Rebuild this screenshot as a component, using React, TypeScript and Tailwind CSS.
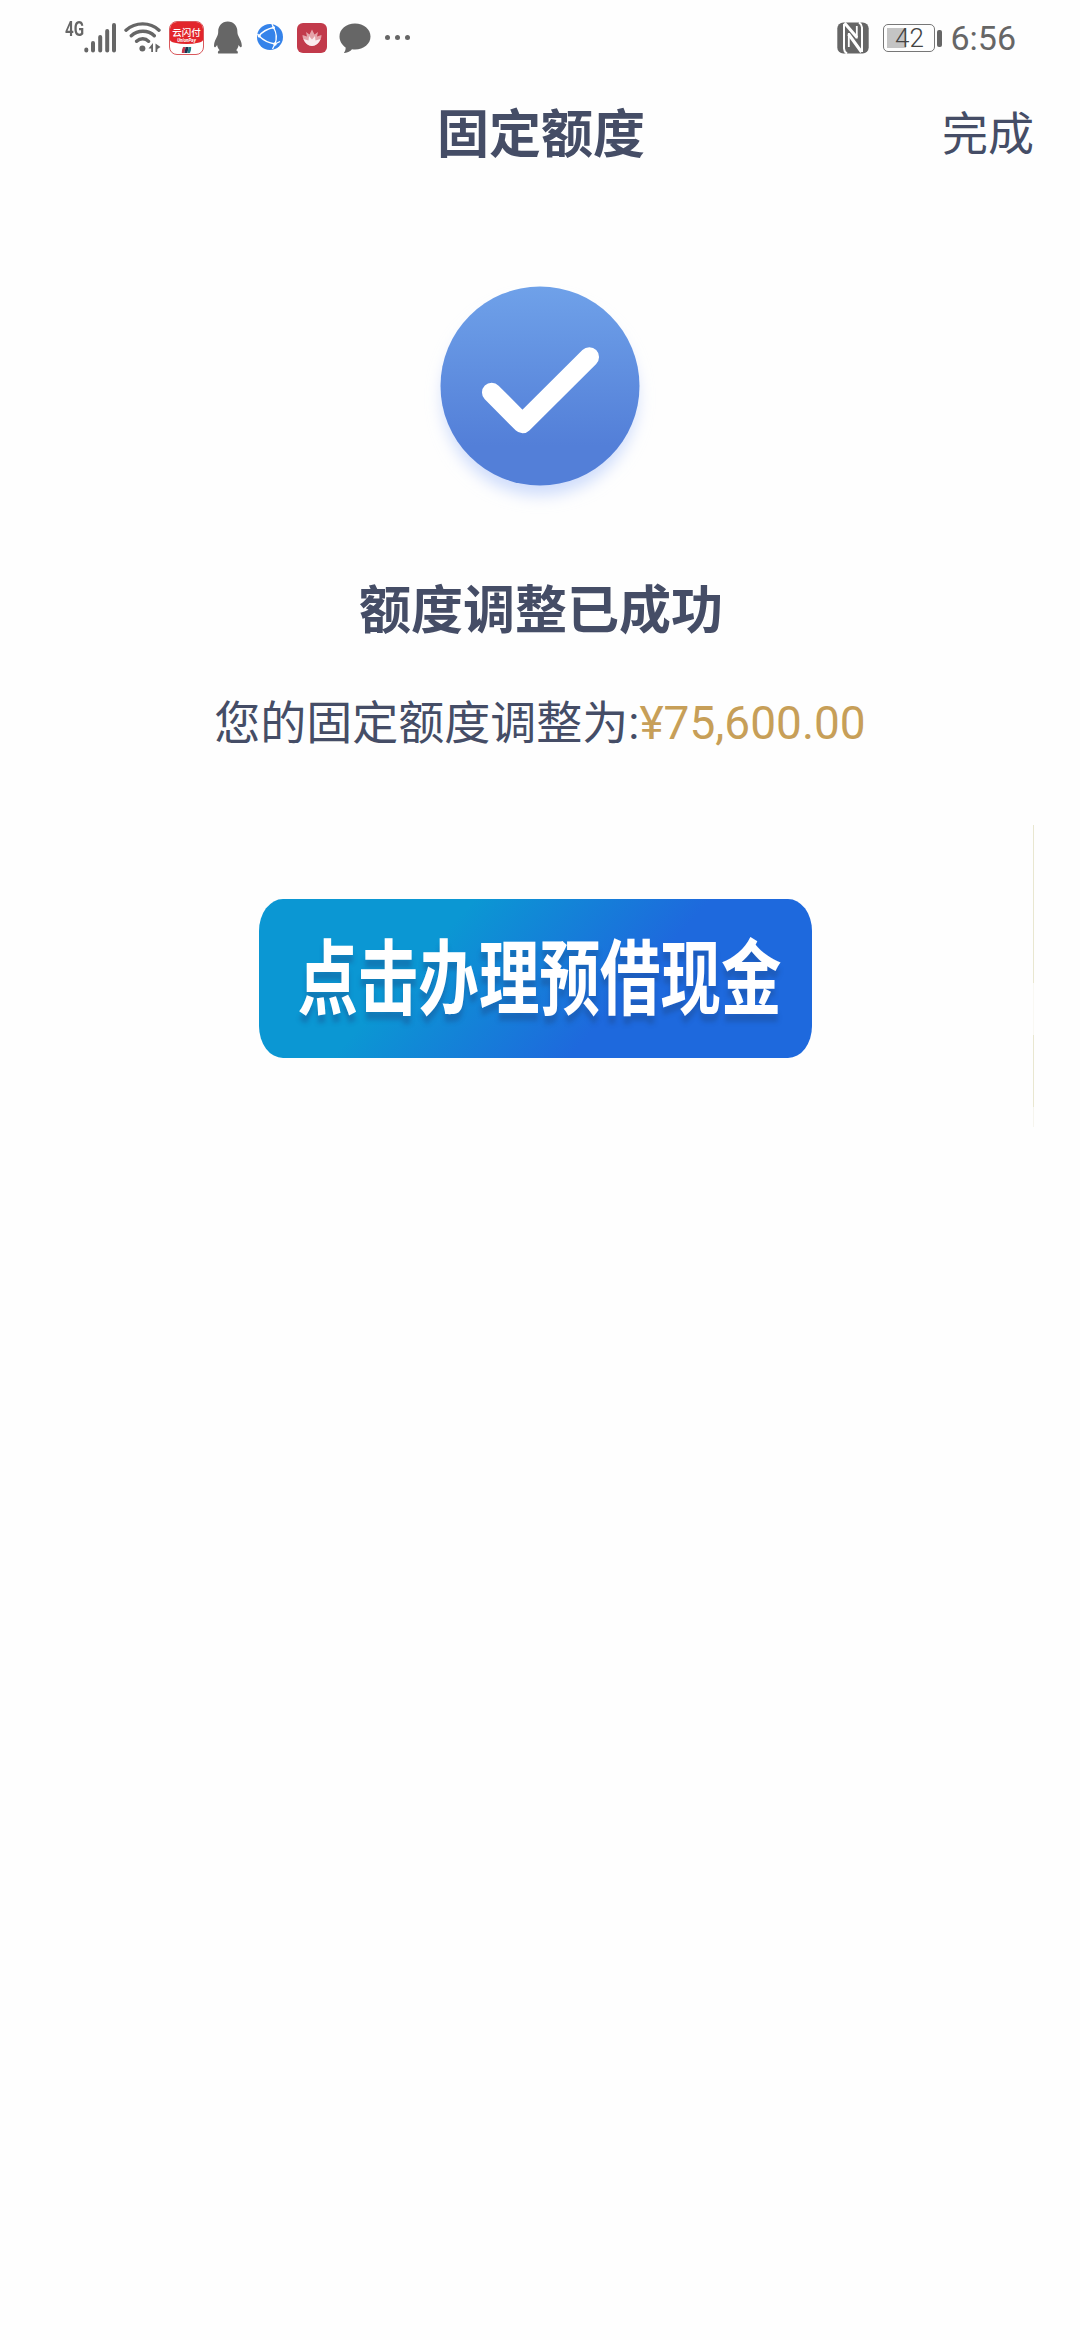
const latin = "font-['Roboto','Noto_Sans_CJK_SC',sans-serif]";

function SignalIcon() {
  return (
    <svg width="32" height="32" viewBox="0 0 32 32" stroke="#666" strokeWidth="4" strokeLinecap="round">
      <path d="M2.3 28.6v.8M9 22v7.4M16.2 16v13.4M23.2 10v19.4M30 4v25.4" />
    </svg>
  );
}

function WifiIcon() {
  return (
    <svg width="38" height="32" viewBox="0 0 38 32" fill="none" stroke="#666" strokeWidth="3.4" strokeLinecap="round">
      <path d="M2 9.2C11.5.8 26 .8 35 9.2M7.3 14.8c6.4-6 17-6 23 0M12.6 20.3c3.6-3.4 8.8-3.4 12 0" />
      <circle cx="18.4" cy="27.4" r="3" fill="#666" stroke="none" />
      <path d="M24.5 27.500l4.500-5.500v9h-1.800v-3.500zM31.500 22.500l5 3.500-3 2-.4 3h-1.600z" fill="#666" stroke="none" />
    </svg>
  );
}

function UnionPayIcon() {
  return (
    <div className="flex h-[34px] w-[35px] flex-col overflow-hidden rounded-[8px] border border-[#d9585c] bg-white">
      <div className="flex h-[22px] flex-col items-center justify-end rounded-b-[50%_4px] bg-[#e2252b] text-white">
        <span className="text-[9.5px] font-medium leading-[10px]">云闪付</span>
        <span className="text-[4.5px] font-bold italic leading-[6px]">UnionPay</span>
      </div>
      <div className="mx-auto mt-[3px] flex h-[6px] w-[9px] -skew-x-12 overflow-hidden rounded-[1px]">
        <div className="flex-1 bg-[#c8384a]" />
        <div className="flex-1 bg-[#20304f]" />
        <div className="flex-1 bg-[#1f7f86]" />
      </div>
    </div>
  );
}

function PenguinIcon() {
  return (
    <svg width="30" height="34" viewBox="0 0 30 34" fill="#666">
      <path d="M14.8.6c6 0 9.6 4.4 9.6 10.2 0 1.600.3 2.600.9 4 1.500 3.200 3.500 6.400 3.500 9.800 0 2.400-1.400 2.300-3.200-.6-.4 2.400-1.300 4-2.500 5.300 1.700.6 2.200 2 1.500 3.300H5.200c-.8-1.300-.2-2.700 1.500-3.300-1.300-1.300-2.200-2.900-2.600-5.300-1.700 2.900-3.100 3-3.100.6 0-3.400 1.900-6.600 3.400-9.800.6-1.400.8-2.400.8-4C5.200 5 8.800.6 14.800.6z" />
    </svg>
  );
}

function BrowserIcon() {
  return (
    <svg width="28" height="28" viewBox="0 0 28 28" fill="none">
      <circle cx="14" cy="14" r="13" fill="#3583ea" />
      <g stroke="#fff" strokeWidth="1.300">
        <path d="M17.500 4.500C11 6 6 9 3 13M3 13c4.500 4.500 9.500 7 16 8M17.500 4.500c3 5 3.500 11 1.500 16.500M19 21l-2.500 5M17.500 4.500L16 1M19 21l5-2.500M3 13L1.500 11" />
      </g>
      <g fill="#fff">
        <circle cx="17.600" cy="4.700" r="1.400" />
        <circle cx="3.200" cy="13" r="1.500" />
        <circle cx="19" cy="21" r="1.700" />
      </g>
    </svg>
  );
}

function LotusIcon() {
  return (
    <svg width="30" height="30" viewBox="0 0 30 30">
      <rect width="30" height="30" rx="6" fill="#c23a4b" />
      <path d="M5.500 12l4.500 1.500L9 9l3.500 2.500L15 6.500l2.500 5L21 9l-1 4.500 4.500-1.500c0 5-3.500 10.500-9.500 11C9 22.500 5.500 17 5.500 12z" fill="#e4a3aa" />
      <path d="M6.500 16l5 1.500L12 13l3 3.500 3-3.500.5 4.500 5-1.500c-1.500 4-4.500 7-8.500 7s-7-3-8.500-7z" fill="#faecee" />
    </svg>
  );
}

function ChatIcon() {
  return (
    <svg width="32" height="31" viewBox="0 0 32 31" fill="#666">
      <path d="M16 .5c8.800 0 15.500 5.600 15.500 13S24.800 26.500 16 26.500c-1 0-2-.1-3-.2-1.800 2-4.200 3.400-7.300 3.700-.6 0-.8-.6-.3-1 .8-1.200 1.400-2.800 1.200-4.600C2.900 22 .5 18 .5 13.500.5 6.100 7.200.5 16 .5z" />
    </svg>
  );
}

function NfcIcon() {
  return (
    <svg width="32" height="32" viewBox="0 0 32 32" fill="none" stroke="#fff">
      <rect x=".3" y=".5" width="31.400" height="31" rx="6" fill="#666" stroke="none" />
      <path d="M7 2v24.500q0 3 3 5M25 30V5.500q0-3-3-5" strokeWidth="2" />
      <path d="M7.500 1L20 15.500M11.500 12L24.500 30" strokeWidth="3" />
      <path d="M19.800 4v12.500M11.800 11v14" strokeWidth="1.800" />
    </svg>
  );
}

function Battery({ level }: { level: number }) {
  return (
    <div className="flex items-center gap-[2px]">
      <div className="relative h-[28px] w-[52px] rounded-[5px] border-[1.500px] border-[#777] p-[3px]">
        <div className="h-full bg-[#c4c4c4]" style={{ width: `${level}%` }} />
        <span className="absolute inset-0 flex items-center justify-center text-[26px] font-light leading-none text-[#444]">
          {level}
        </span>
      </div>
      <div className="h-[17px] w-[5px] rounded-[2px] bg-[#666]" />
    </div>
  );
}

function StatusBar() {
  return (
    <div className="flex h-[76px] items-start justify-between pl-[65px] pr-[64px] text-[#666]">
      <div className="flex items-start pt-[21px]">
        <span className="w-[19px] origin-left scale-x-[0.76] text-[20px] font-bold leading-[17px]">4G</span>
        <SignalIcon />
        <div className="ml-[8px]"><WifiIcon /></div>
        <div className="ml-[7px]"><UnionPayIcon /></div>
        <div className="ml-[9px]"><PenguinIcon /></div>
        <div className="ml-[13px] mt-[2px]"><BrowserIcon /></div>
        <div className="ml-[13px] mt-[2px]"><LotusIcon /></div>
        <div className="ml-[12px] mt-[2px]"><ChatIcon /></div>
        <div className="ml-[14px] mt-[14px] flex gap-[5px]">
          <i className="size-[5px] rounded-full bg-[#666]" />
          <i className="size-[5px] rounded-full bg-[#666]" />
          <i className="size-[5px] rounded-full bg-[#666]" />
        </div>
      </div>
      <div className="flex h-[76px] items-center">
        <NfcIcon />
        <div className="ml-[14px]"><Battery level={42} /></div>
        <span className="ml-[8px] text-[34px] leading-none">6:56</span>
      </div>
    </div>
  );
}

function SuccessMark() {
  return (
    <svg width="260" height="260" viewBox="0 0 260 260" fill="none">
      <defs>
        <linearGradient id="disc" x1="0" y1="0" x2="0" y2="1">
          <stop offset="0" stopColor="#6fa1e9" />
          <stop offset=".8" stopColor="#537fd8" />
          <stop offset="1" stopColor="#537fd8" />
        </linearGradient>
        <filter id="glow" x="-20%" y="-20%" width="140%" height="140%">
          <feGaussianBlur stdDeviation="8" />
        </filter>
      </defs>
      <circle cx="130" cy="138" r="97" fill="#cddbfb" filter="url(#glow)" />
      <circle cx="130" cy="126" r="99.500" fill="url(#disc)" />
      <path d="M81.700 132.500l30.800 31L179.300 97" stroke="#fff" strokeWidth="19.500" strokeLinecap="round" strokeLinejoin="round" />
    </svg>
  );
}

export default function App() {
  return (
    <div className={`flex h-[2340px] w-[1080px] flex-col overflow-hidden bg-[#fefefe] text-[#454d66] ${latin}`}>
      <StatusBar />

      <header className="grid h-[114px] grid-cols-[1fr_auto_1fr] items-center px-[46px]">
        <h1 className="col-start-2 pl-[2px] pt-[5px] text-[52px] font-bold leading-none">固定额度</h1>
        <button className="justify-self-end pt-[2px] text-[46px] leading-none">完成</button>
      </header>

      <main className="flex flex-col items-center pt-[70px]">
        <SuccessMark />
        <h2 className="mt-[64px] pl-[2px] text-[52px] font-bold leading-[56px]">额度调整已成功</h2>
        <p className="mt-[58px] whitespace-nowrap text-[46px] leading-[50px]">
          您的固定额度调整为:<span className="text-[#c79f58]">¥75,600.00</span>
        </p>

        <section className="mt-[77px] flex h-[302px] w-full justify-between pl-[259px] pr-[46px]">
          <button className="mt-[74px] flex h-[159px] w-[553px] items-center justify-center rounded-[24px/32px] bg-[linear-gradient(132deg,#0b97d3_31%,#1e69dd_65%)] pl-[8px] pt-[5px] text-white">
            <span className="scale-y-[1.350] whitespace-nowrap text-[60.500px] font-bold leading-none [text-shadow:0_6px_4px_rgba(30,70,130,0.35)]">
              点击办理预借现金
            </span>
          </button>
          <div className="flex w-px flex-col">
            <div className="h-[158px] bg-[#e9e7d0]" />
            <div className="h-[52px] bg-[#f9f8f3]" />
            <div className="h-[72px] bg-[#e9e7d0]" />
            <div className="flex-1 bg-[#f6f5ee]" />
          </div>
        </section>
      </main>
    </div>
  );
}
